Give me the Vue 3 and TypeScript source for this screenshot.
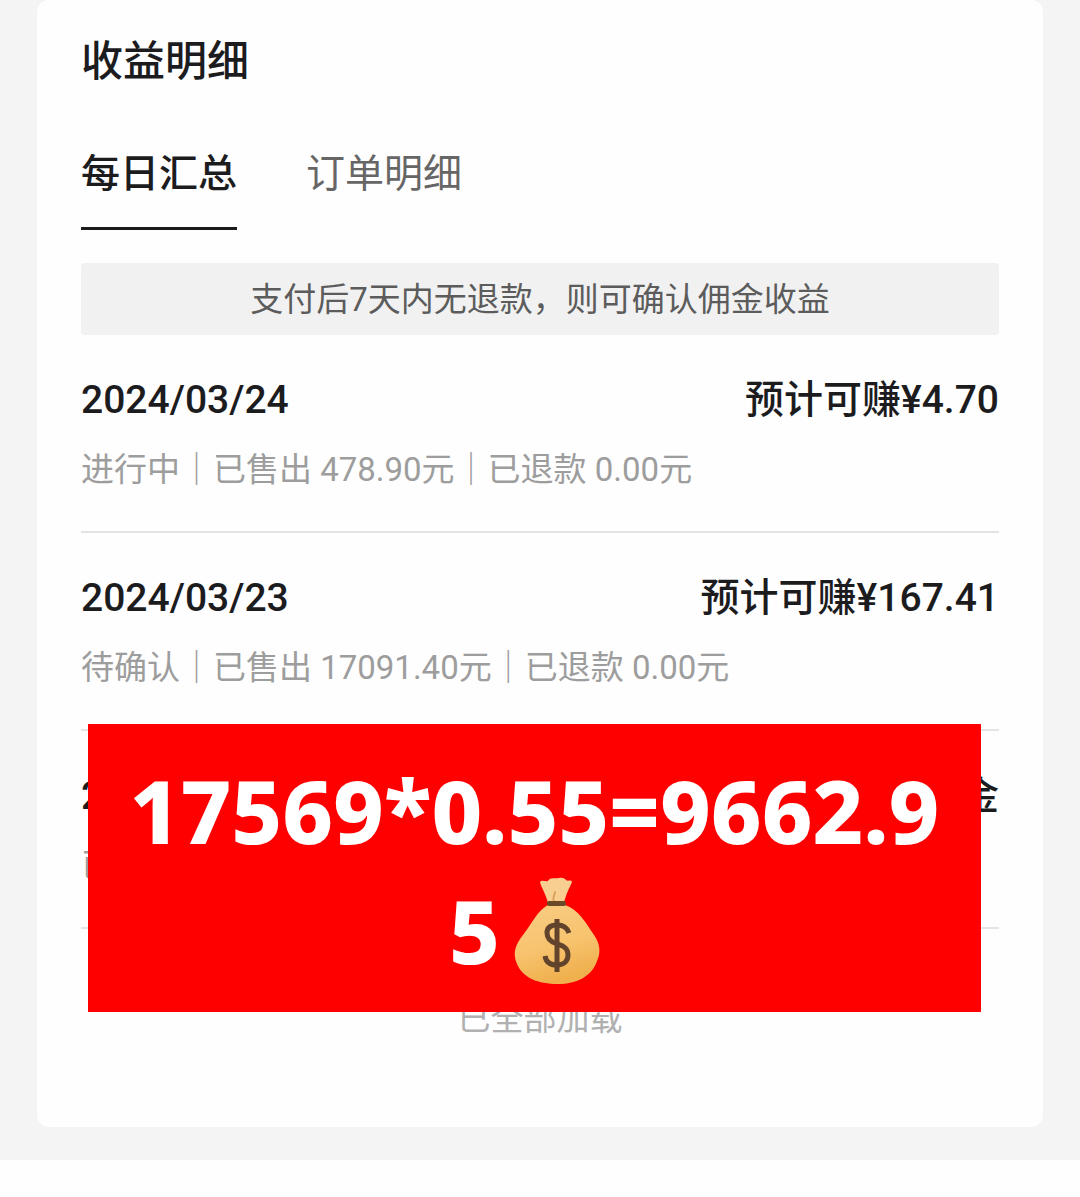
<script setup lang="ts">
import { ref } from 'vue'

interface DayRow {
  date: string
  amount: string
  summary: string
}

const tabs: string[] = ['每日汇总', '订单明细']
const active = ref<number>(0)

const rows: DayRow[] = [
  { date: '2024/03/24', amount: '预计可赚¥4.70', summary: '进行中｜已售出 478.90元｜已退款 0.00元' },
  { date: '2024/03/23', amount: '预计可赚¥167.41', summary: '待确认｜已售出 17091.40元｜已退款 0.00元' },
  { date: '2024/03/22', amount: '暂无佣金', summary: '已售出 0.00元' },
]
</script>

<template>
  <main class="page">
    <section class="card">
      <h1 class="title">收益明细</h1>
      <nav class="tabs">
        <button
          v-for="(tab, i) in tabs"
          :key="tab"
          type="button"
          class="tab"
          :class="{ active: active === i }"
          @click="active = i"
        >{{ tab }}</button>
      </nav>
      <p class="notice">支付后7天内无退款，则可确认佣金收益</p>
      <div class="records">
        <ul class="list">
          <li v-for="row in rows" :key="row.date" class="row">
            <div class="row-head">
              <span>{{ row.date }}</span>
              <span>{{ row.amount }}</span>
            </div>
            <div class="row-sub">{{ row.summary }}</div>
          </li>
        </ul>
        <p class="end">已全部加载</p>
        <div class="banner">
          17569*0.55=9662.95<svg class="bag" viewBox="0 0 120 112" role="img" aria-label="钱袋">
            <defs>
              <linearGradient id="bagFill" x1="0" y1="0" x2="0.3" y2="1">
                <stop offset="0" stop-color="#f8cd84" />
                <stop offset="0.6" stop-color="#f7c36e" />
                <stop offset="1" stop-color="#f0b04e" />
              </linearGradient>
            </defs>
            <path d="M48 29 C46 20 41 13 40 8 C42 5 45 8 48 7 C50 3 55 5 59 4 C63 3 65 5 66 6 C68 8 71 5 72 8 C69 15 66 20 64 29 Z" fill="#f8cf90" />
            <path d="M54 27 C52 24 55 21 55 18" fill="none" stroke="#d9a460" stroke-width="2" stroke-linecap="round" />
            <path d="M48 31 H65 C78 35 86 49 94 61 C100 70 101 78 97 87 C92 102 77 110 58 110 C38 110 23 104 17 90 C12 78 16 70 23 61 C33 48 37 37 48 31 Z" fill="url(#bagFill)" />
            <rect x="47" y="27" width="19" height="5" rx="2" fill="#6b4a28" />
            <path d="M69 59 C67 53 63 51 57 51 C50 51 47 54 47 59 C47 65 51 68 57 70 C65 72 68 75 68 81 C68 87 64 91 57 91 C50 91 46 88 45 82" fill="none" stroke="#62432c" stroke-width="5" />
            <path d="M57 45 V98" stroke="#62432c" stroke-width="5" />
          </svg>
        </div>
      </div>
    </section>
  </main>
</template>

<style>
body {
  background: #fefefe;
}
</style>

<style scoped>
.page {
  padding: 0 37px 33px;
  background: #f4f4f4;
  font-family: Roboto, "Noto Sans CJK SC", sans-serif;
  color: #1c1c1e;
}
.card {
  background: #fefefe;
  border-radius: 12px;
  padding: 38px 44px 88px;
}
.title {
  margin: 0 0 64px;
  font-size: 42px;
  line-height: 48px;
  font-weight: 500;
}
.tabs {
  display: flex;
  gap: 69px;
  margin-bottom: 33px;
}
.tab {
  padding: 0 0 29px;
  border: 0;
  border-bottom: 3px solid transparent;
  background: none;
  font-family: inherit;
  font-size: 39px;
  line-height: 48px;
  color: #666;
  cursor: pointer;
}
.tab.active {
  color: #1c1c1e;
  font-weight: 500;
  border-bottom-color: #1c1c1e;
}
.notice {
  margin: 0;
  padding: 2px 0 0;
  border-radius: 4px;
  background: #f1f1f1;
  color: #5c5c5c;
  font-size: 33px;
  line-height: 70px;
  text-align: center;
}
.records {
  position: relative;
}
.list {
  margin: 0;
  padding: 0;
  list-style: none;
}
.row {
  padding: 41px 0;
  border-bottom: 2px solid #e4e4e4;
}
.row-head {
  display: flex;
  justify-content: space-between;
  margin-bottom: 26px;
  font-size: 39px;
  line-height: 48px;
  font-weight: 500;
}
.row-sub {
  font-size: 33px;
  line-height: 40px;
  color: #9d9d9d;
}
.end {
  margin: 70px 0 0;
  font-size: 33px;
  line-height: 40px;
  text-align: center;
  color: #b0b0b0;
}
.banner {
  position: absolute;
  top: 389px;
  left: 7px;
  right: 18px;
  padding: 26px 40px 22px;
  background: #fe0000;
  color: #fff;
  font-family: "Noto Sans", sans-serif;
  font-size: 88px;
  line-height: 120px;
  font-weight: 800;
  text-align: center;
  word-break: break-all;
}
.bag {
  width: 120px;
  height: 112px;
  vertical-align: -22px;
}
</style>
